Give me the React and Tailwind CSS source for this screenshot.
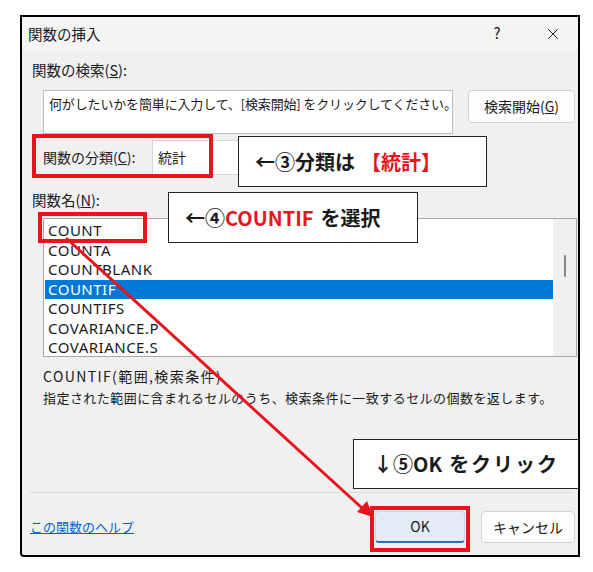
import { X } from "lucide-react";

const items = [
  "COUNT",
  "COUNTA",
  "COUNTBLANK",
  "COUNTIF",
  "COUNTIFS",
  "COVARIANCE.P",
  "COVARIANCE.S",
];

const ui = "font-['Noto_Sans_CJK_JP',sans-serif]";

export default function App() {
  return (
    <div
      className={`relative w-[593px] h-[572px] bg-white overflow-hidden text-[#1a1a1a] ${ui}`}
    >
      <div className="pt-[15px] pl-[20px]">
        <div className="w-[560px] h-[542px] border-2 border-black bg-[#f0f0f0] flex flex-col rounded-bl-[4px]">
          {/* title bar */}
          <div className="h-[33px] flex items-center bg-[#f4f4f4] pl-[6px] pr-[13px]">
            <span className="text-[14.5px]">関数の挿入</span>
            <div className="ml-auto flex items-center gap-[32px]">
              <span className="w-[24px] text-center text-[15px]">?</span>
              <span className="w-[24px] flex justify-center">
                <X size={18} strokeWidth={1.3} />
              </span>
            </div>
          </div>

          <div className="pl-[10px] pr-[1px]">
            <div className="mt-[10px] h-[20px] leading-[20px] text-[14.5px]">
              関数の検索(<span className="underline">S</span>):
            </div>

            <div className="mt-[10px] flex items-start">
              <div className="ml-[11px] w-[410px] h-[44px] bg-white border border-[#bdbdbd] px-[5px] pt-[3px] text-[13px] leading-[20px] tracking-[-0.15px] whitespace-nowrap">
                何がしたいかを簡単に入力して、[検索開始] をクリックしてください。
              </div>
              <button className="ml-[15px] w-[107px] h-[33px] bg-[#fdfdfd] border border-[#d0d0d0] rounded-[4px] text-[14px]">
                検索開始(<span className="underline">G</span>)
              </button>
            </div>

            <div className="mt-[6px] flex items-center h-[35px] pl-[11px]">
              <span className="w-[109px] text-[14px]">
                関数の分類(<span className="underline">C</span>):
              </span>
              <div className="w-[250px] h-[35px] bg-white border border-[#d6d6d6] flex items-center pl-[5px] text-[14px]">
                統計
              </div>
            </div>

            <div className="mt-[15px] h-[20px] leading-[20px] text-[14.5px]">
              関数名(<span className="underline">N</span>):
            </div>

            <div className="mt-[8px] ml-[11px] w-[534px] h-[139px] bg-white border border-[#a8a8a8] flex">
              <div className="flex-1 pt-[2px] font-['Noto_Sans',sans-serif] text-[15px] tracking-[0.5px]">
                {items.map((it) => (
                  <div
                    key={it}
                    className={`h-[19.5px] leading-[19.5px] pl-[3px] ml-[1px] ${
                      it === "COUNTIF" ? "bg-[#0078d7] text-white" : ""
                    }`}
                  >
                    {it}
                  </div>
                ))}
              </div>
              <div className="w-[23px] bg-[#f0f0f0] flex justify-center pt-[36px]">
                <div className="w-[2px] h-[22px] bg-[#858585] rounded-full" />
              </div>
            </div>

            <div className="mt-[9px] ml-[11px] leading-[21px]">
              <div className="text-[14px] tracking-[1.4px]">COUNTIF(範囲,検索条件)</div>
              <div className="text-[13px] tracking-[0.45px]">
                指定された範囲に含まれるセルのうち、検索条件に一致するセルの個数を返します。
              </div>
            </div>
          </div>

          <div className="mt-[84px] mx-[8px] h-px bg-[#dadada]" />

          <div className="mt-[18px] flex items-center pl-[8px] pr-[3px]">
            <a className="text-[13px] text-[#0a63c9] underline">この関数のヘルプ</a>
            <div className="ml-auto flex gap-[16px]">
              <button className="w-[90px] h-[32px] bg-[#e1ecf8] border border-[#c4d7ee] border-b-2 border-b-[#2a6ec8] rounded-[4px] text-[14px]">
                OK
              </button>
              <button className="w-[94px] h-[32px] bg-[#fdfdfd] border border-[#d0d0d0] rounded-[4px] text-[14px]">
                キャンセル
              </button>
            </div>
          </div>
        </div>
      </div>

      {/* annotations */}
      <div className="absolute left-[32px] top-[134px] w-[181px] h-[44px] border-[4px] border-[#e8141c]" />
      <div className="absolute left-[38px] top-[212px] w-[109px] h-[31px] border-[4px] border-[#e8141c]" />
      <div className="absolute left-[370px] top-[506px] w-[100px] h-[46px] border-[4px] border-[#e8141c]" />

      <svg
        className="absolute inset-0 pointer-events-none"
        width="593"
        height="572"
        viewBox="0 0 593 572"
      >
        <line x1="66" y1="238" x2="362" y2="508" stroke="#e8141c" strokeWidth="3" />
        <polygon points="373,517 357,512 367,501" fill="#e8141c" />
      </svg>

      <div className="absolute left-[238px] top-[136px] w-[249px] h-[51px] bg-white border-[1.5px] border-[#222] flex items-center pl-[16px] text-[20px] font-semibold">
        ←③分類は<span className="ml-[6px] text-[#e8141c]">【統計】</span>
      </div>
      <div className="absolute left-[168px] top-[192px] w-[250px] h-[51px] bg-white border-[1.5px] border-[#222] flex items-center pl-[16px] text-[20px] font-semibold">
        ←④<span className="text-[#e8141c]">COUNTIF</span>
        <span className="ml-[7px]">を選択</span>
      </div>
      <div className="absolute left-[353px] top-[439px] w-[226px] h-[50px] bg-white border-[1.5px] border-[#222] flex items-center pl-[19px] text-[20px] font-semibold">
        ↓⑤OK<span className="ml-[7px] tracking-[2px]">をクリック</span>
      </div>
    </div>
  );
}
